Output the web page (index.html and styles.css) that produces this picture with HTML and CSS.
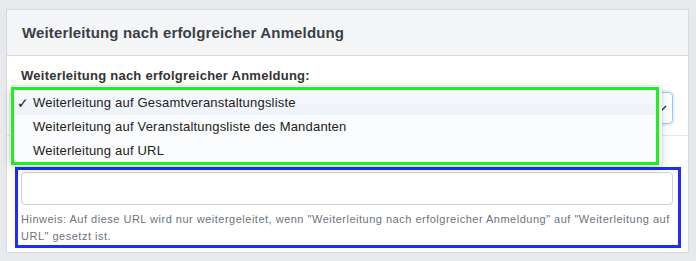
FILE: index.html
```html
<!DOCTYPE html>
<html lang="de">
<head>
    <meta charset="UTF-8">
    <meta name="viewport" content="width=device-width, initial-scale=1.0">
    <title>Weiterleitung</title>
    <link rel="stylesheet" href="styles.css">
</head>
<body>
    <div class="card">
        <div class="card-header">Weiterleitung nach erfolgreicher Anmeldung</div>

        <div class="card-body">
            <!-- Redirect select -->
            <div class="form-group">
                <label class="form-label">Weiterleitung nach erfolgreicher Anmeldung:</label>
                <div class="select-box">
                    <svg class="chevron" width="10" height="6" viewBox="0 0 10 6"><path d="M1 1l4 4 4-4" fill="none" stroke="#444" stroke-width="1.6"/></svg>
                </div>
            </div>
            <div class="divider"></div>

            <!-- URL field -->
            <div class="url-group">
                <input type="text" class="text-input">
                <p class="hint">Hinweis: Auf diese URL wird nur weitergeleitet, wenn "Weiterleitung nach erfolgreicher Anmeldung" auf "Weiterleitung auf URL" gesetzt ist.</p>
            </div>

            <!-- Open native popup -->
            <div class="menu">
                <div class="menu-inner">
                    <div class="menu-item checked"><span class="check">✓</span>Weiterleitung auf Gesamtveranstaltungsliste</div>
                    <div class="menu-item">Weiterleitung auf Veranstaltungsliste des Mandanten</div>
                    <div class="menu-item">Weiterleitung auf URL</div>
                </div>
            </div>
        </div>
    </div>
</body>
</html>
```

FILE: styles.css
```css
body {
    margin: 0;
    padding: 9px 7px 6px 6px;
    background-color: #e8e9ec;
    font-family: "Liberation Sans", Arial, sans-serif;
    color: #333;
}

.card {
    background-color: #ffffff;
    border: 1px solid #d9dadd;
}

.card-header {
    height: 45px;
    padding: 0 15px;
    display: flex;
    align-items: center;
    background-color: #f4f5f7;
    border-bottom: 1px solid #d9dadd;
    font-size: 15px;
    font-weight: bold;
    letter-spacing: 0.15px;
    color: #3b3f45;
}

.card-body {
    position: relative;
    padding: 11px 15px 4px 14px;
}

.form-label {
    display: block;
    font-size: 13px;
    font-weight: bold;
    line-height: 18px;
    letter-spacing: 0.25px;
    color: #333;
}

.select-box {
    height: 30px;
    margin-top: 7px;
    border: 1px solid #9cc2ef;
    border-radius: 4px;
    box-shadow: 0 0 0 2px rgba(120, 170, 235, 0.15);
    display: flex;
    align-items: center;
    justify-content: flex-end;
    padding-right: 5px;
}

.divider {
    height: 1px;
    margin: 11px -15px 0 -14px;
    background-color: #e6e7ea;
}

.url-group {
    margin: 31px -8px 0 -6px;
    padding: 2px 5px 0 3px;
    border: 3px solid #1f2cff;
}

.text-input {
    display: block;
    box-sizing: border-box;
    width: 100%;
    height: 33px;
    border: 1px solid #cfd0d3;
    border-radius: 4px;
    font-size: 13px;
}

.hint {
    margin: 6px 0 0;
    font-size: 11px;
    line-height: 17px;
    color: #6c737b;
    letter-spacing: 0.5px;
}

.menu {
    position: absolute;
    left: 3px;
    top: 30px;
    width: 652px;
    height: 80px;
    border-radius: 6px;
    background-color: rgba(250, 251, 252, 0.98);
    box-shadow: 0 2px 9px rgba(0, 0, 0, 0.16), 0 0 0 1px rgba(0, 0, 0, 0.06);
}

.menu-inner {
    margin: 1px 3px 0 1px;
    height: 71px;
    border: 3px solid #1ef01e;
    padding-top: 1px;
}

.menu-item {
    position: relative;
    height: 24px;
    line-height: 24px;
    padding-left: 19px;
    font-size: 13px;
    letter-spacing: 0.2px;
    color: #222;
}

.menu-item.checked {
    background: linear-gradient(#f6f8fb, #eef3fa);
}

.check {
    position: absolute;
    left: 3px;
    top: 0;
    font-size: 14px;
    font-weight: bold;
    font-family: "DejaVu Sans", sans-serif;
}
```
